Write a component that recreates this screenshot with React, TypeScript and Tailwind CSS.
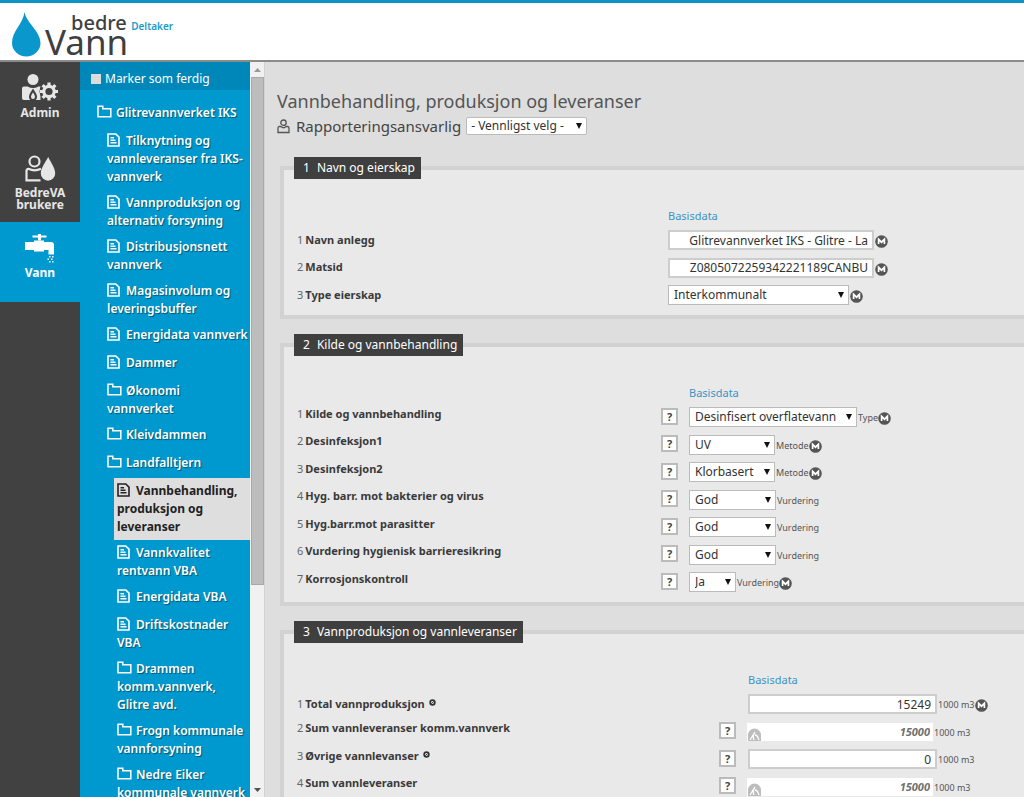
import type { ReactNode } from "react";

type TreeItem = {
    lines: string[];
    icon: "folder" | "doc";
    level: 0 | 1 | 2;
    active?: boolean;
};

const tree: TreeItem[] = [
    { lines: ["Glitrevannverket IKS"], icon: "folder", level: 0 },
    { lines: ["Tilknytning og", "vannleveranser fra IKS-", "vannverk"], icon: "doc", level: 1 },
    { lines: ["Vannproduksjon og", "alternativ forsyning"], icon: "doc", level: 1 },
    { lines: ["Distribusjonsnett", "vannverk"], icon: "doc", level: 1 },
    { lines: ["Magasinvolum og", "leveringsbuffer"], icon: "doc", level: 1 },
    { lines: ["Energidata vannverk"], icon: "doc", level: 1 },
    { lines: ["Dammer"], icon: "doc", level: 1 },
    { lines: ["Økonomi", "vannverket"], icon: "folder", level: 1 },
    { lines: ["Kleivdammen"], icon: "folder", level: 1 },
    { lines: ["Landfalltjern"], icon: "folder", level: 1 },
    { lines: ["Vannbehandling,", "produksjon og", "leveranser"], icon: "doc", level: 2, active: true },
    { lines: ["Vannkvalitet", "rentvann VBA"], icon: "doc", level: 2 },
    { lines: ["Energidata VBA"], icon: "doc", level: 2 },
    { lines: ["Driftskostnader", "VBA"], icon: "doc", level: 2 },
    { lines: ["Drammen", "komm.vannverk,", "Glitre avd."], icon: "folder", level: 2 },
    { lines: ["Frogn kommunale", "vannforsyning"], icon: "folder", level: 2 },
    { lines: ["Nedre Eiker", "kommunale vannverk"], icon: "folder", level: 2 },
];

const indent = ["pl-[17px]", "pl-[27px]", "pl-[37px]"];

function FolderIcon() {
    return (
        <svg className="inline-block mr-1 align-[-1px]" width="15" height="13" viewBox="0 0 15 13" fill="none" stroke="currentColor" strokeWidth="1.5">
            <path d="M1 1.2h4.8v2.6h8v8H1z" />
        </svg>
    );
}

function DocIcon() {
    return (
        <svg className="inline-block mr-1.5 align-[-2px]" width="13" height="14" viewBox="0 0 13 14" fill="none" stroke="currentColor" strokeWidth="1.6">
            <path d="M1 1h7.8L12 4.2V13H1z" />
            <path d="M3.500 4.700h3.500M3.500 7.200h5M3.500 9.800h6" strokeWidth="1.400" />
        </svg>
    );
}

function AdminIcon() {
    return (
        <svg width="36" height="30" viewBox="0 0 36 30" fill="#e6e6e6">
            <circle cx="11" cy="6.5" r="5.5" />
            <path d="M0 15.500q0-2 2-2h3.500q5.500 3 11 0h2v13.500H2q-2 0-2-2z" />
            <path d="M11 15.500c2.200 3.500 4 5.800 4 8.200a4 4 0 0 1-8 0c0-2.400 1.800-4.700 4-8.200z" fill="#414141" />
            <path d="M11 19.500c1.300 2 2 3 2 4.500a2 2 0 0 1-4 0c0-1.500.7-2.500 2-4.500z" />
            <circle cx="27" cy="18.500" r="9.500" fill="#414141" />
            <circle cx="27" cy="18.500" r="5.200" fill="none" stroke="#e6e6e6" strokeWidth="3.200" />
            <g stroke="#e6e6e6" strokeWidth="3.200">
                <path d="M27 9.500v4M27 23.500v4M18 18.500h4M32 18.500h4M20.600 12.100l3 3M30.400 21.900l3 3M33.400 12.100l-3 3M23.600 21.900l-3 3" />
            </g>
        </svg>
    );
}

function UsersIcon() {
    return (
        <svg width="31" height="27" viewBox="0 0 31 27" fill="none" stroke="#e6e6e6" strokeWidth="2.200">
            <circle cx="9.500" cy="6.500" r="5" />
            <path d="M16 13.800q-6.500 3-12.500 0-2 0-2 2.500v9h14" />
            <path d="M23.200 2c3 6 7 11 7 16.500a7.200 7.200 0 0 1-14.400 0C15.800 13 20 8 23.200 2z" fill="#e6e6e6" stroke="none" />
        </svg>
    );
}

function TapIcon() {
    return (
        <svg width="30" height="29" viewBox="0 0 30 29" fill="#fff">
            <path d="M7.500 1.500H13V0h3v1.500h5.500v2H16v3h-3v-3H7.500z" />
            <path d="M0 8h9V6.500h10V8h7q3 0 3 3v9.500h-5.500V16H19v1.500H9V16H0z" />
            <path d="M24 22h1.500v1.500H24zM27 22h1.500v1.500H27zM22.500 24.500H24V26h-1.500zM26 24.500h1.500V26H26zM24 27h1.500v1.500H24zM27 27h1.500v1.500H27z" />
        </svg>
    );
}

function Header() {
    return (
        <header className="flex items-start h-[62px] shrink-0 bg-white border-t-3 border-t-[#0b94c5] border-b-2 border-b-[#8c8c8c]">
            <a href="#" className="flex pl-3 text-[#3f3f3f]" aria-label="bedre Vann">
                <svg className="mt-2" width="29" height="46" viewBox="0 0 29 46">
                    <path d="M12.500 1c1.800 11 16 19 16 31A14.200 13.500 0 0 1 0 32C0 20 11 13 12.500 1z" fill="#0a98cc" />
                </svg>
                <span className="flex flex-col pl-1 pt-[11px]">
                    <span className="pl-[26px] text-[20px] leading-[18px] font-medium">bedre</span>
                    <span className="text-[35px] leading-[20px]">Vann</span>
                </span>
            </a>
            <span className="pt-4 pl-[3px] text-[10px] leading-[14px] font-semibold text-[#1b9bc9]">Deltaker</span>
        </header>
    );
}

function NavItem({ icon, children, active }: { icon: ReactNode; children: ReactNode; active?: boolean }) {
    return (
        <a
            href="#"
            className={
                "flex flex-col items-center gap-1 h-20 pt-[11px] text-[12px] leading-[12px] font-bold text-center " +
                (active ? "bg-[#0099cf] text-white" : "text-[#e6e6e6]")
            }
        >
            <span className="flex items-center h-[30px]">{icon}</span>
            <span>{children}</span>
        </a>
    );
}

function Tree() {
    return (
        <div className="flex w-[185px] shrink-0 bg-[#0099cf]">
            <div className="w-[170px] overflow-hidden text-white">
                <label className="flex items-center gap-1 h-7 pt-1.5 pl-[11px] bg-[#0087ba] text-[12px]">
                    <input type="checkbox" className="appearance-none w-[10px] h-[10px] bg-[#dcdcdc]" />
                    Marker som ferdig
                </label>
                <ul className="pt-[10px]">
                    {tree.map((item) => (
                        <li key={item.lines[0]} className={item.active ? "ml-[34px]" : ""}>
                            <a
                                href="#"
                                className={
                                    "block min-h-7 py-1 text-[12px] leading-[18px] whitespace-nowrap " +
                                    (item.active
                                        ? "pl-[3px] font-bold bg-[#dedede] text-[#222]"
                                        : indent[item.level] + " font-semibold [text-shadow:1px_1px_1px_rgba(0,0,0,0.45)]")
                                }
                            >
                                {item.icon === "folder" ? <FolderIcon /> : <DocIcon />}
                                {item.lines.map((line, i) => (
                                    <span key={line}>
                                        {i > 0 && <br />}
                                        {line}
                                    </span>
                                ))}
                            </a>
                        </li>
                    ))}
                </ul>
            </div>
            <div className="flex flex-col w-[15px] pl-px bg-[#f1f1f1] border-r border-[#d2d2d2]">
                <span className="flex items-center justify-center h-[15px] shrink-0">
                    <svg width="7" height="4" viewBox="0 0 7 4"><path d="M0 4l3.500-4L7 4z" fill="#999" /></svg>
                </span>
                <div className="flex-1">
                    <div className="h-[72%] bg-[#bdbdbd] border border-[#a8a8a8]" />
                </div>
                <span className="flex items-center justify-center h-[15px] shrink-0">
                    <svg width="7" height="4" viewBox="0 0 7 4"><path d="M0 0l3.500 4L7 0z" fill="#505050" /></svg>
                </span>
            </div>
        </div>
    );
}

function Badge() {
    return (
        <svg className="shrink-0 mt-[3px]" width="13" height="13" viewBox="0 0 13 13">
            <circle cx="6.500" cy="6.500" r="6.300" fill="#555" />
            <path d="M3.600 9V4.300l2.900 2.900 2.900-2.900V9" fill="none" stroke="#fff" strokeWidth="1.700" />
        </svg>
    );
}

function Select({ id, value, width, className = "h-5 pl-[5px]" }: { id: string; value: string; width: string; className?: string }) {
    return (
        <span className={"relative inline-flex items-center " + width}>
            <select
                id={id}
                className={"appearance-none w-full text-[12px] leading-[16px] text-[#333] bg-white border border-[#bbb] " + className}
            >
                <option>{value}</option>
            </select>
            <svg className="absolute right-[5px] pointer-events-none" width="6" height="6" viewBox="0 0 6 6">
                <path d="M0 0h6L3 6z" fill="#111" />
            </svg>
        </span>
    );
}

function Input({ id, value, width }: { id: string; value: string; width: string }) {
    return (
        <input
            id={id}
            defaultValue={value}
            className={"h-5 px-1 text-[12px] text-right text-[#333] bg-white border-2 border-[#cdcdcd] " + width}
        />
    );
}

function Computed({ id, value }: { id: string; value: string }) {
    return (
        <span className="relative -ml-px">
            <input
                id={id}
                readOnly
                defaultValue={value}
                className="block w-[186px] h-[18px] px-[3px] text-[11px] font-bold italic text-right text-[#707070] bg-white"
            />
            <svg className="absolute left-0 bottom-0" width="15" height="13" viewBox="0 0 15 13">
                <path d="M1 13V7a6.500 6.500 0 0 1 13 0v6z" fill="#bdbdbd" />
                <path d="M3 12l5-8M8 4c-2 3-2 6-1 8M8 7c3 0 3 3 4 5" fill="none" stroke="#fff" strokeWidth="1.300" />
            </svg>
        </span>
    );
}

function Section({ no, title, cols, children }: { no: number; title: string; cols: string; children: ReactNode }) {
    return (
        <fieldset className="mb-[15px] pt-[27px] pb-[6px] pl-[13px] bg-[#e9e9e9] border-4 border-r-0 border-[#d2d2d2]">
            <legend className="-ml-[3px] pl-[9px] pr-[6px] text-[12px] leading-[22px] text-white bg-[#3f3f3f]">
                {no}
                <span className="pl-[7px]">{title}</span>
            </legend>
            <div className={"grid h-5 items-center " + cols}>
                <span className="col-start-3 text-[11px] text-[#3a94c4]">Basisdata</span>
            </div>
            <div>{children}</div>
        </fieldset>
    );
}

type RowProps = {
    id: string;
    no: number;
    label: string;
    cols: string;
    raised?: boolean;
    help?: boolean;
    mark?: boolean;
    unit?: string;
    badge?: boolean;
    children: ReactNode;
};

function Row({ id, no, label, cols, raised, help, mark, unit, badge, children }: RowProps) {
    return (
        <div className={"grid items-center h-7 even:h-[27px] " + cols}>
            <label htmlFor={id} className={"text-[11px] font-bold text-[#3a3a3a] " + (raised ? "pb-1.5" : "")}>
                <span className="pr-[2px] font-normal text-[#666]">{no}</span>
                {label}
                {mark && (
                    <svg className="inline-block ml-1 align-[2px]" width="7" height="7" viewBox="0 0 7 7">
                        <circle cx="3.500" cy="3.500" r="2.300" fill="#eee" stroke="#333" strokeWidth="1.800" />
                        <path d="M2.500 4.500l2-2" stroke="#333" />
                    </svg>
                )}
            </label>
            <span className="pb-[2px]">
                {help && (
                    <button type="button" className="block w-[17px] h-[17px] text-[11px] leading-[13px] font-bold text-[#444] bg-white border-2 border-[#bbb]">
                        ?
                    </button>
                )}
            </span>
            <span className="flex items-center gap-px">
                {children}
                <span className="flex items-center">
                    {unit && <span className="pt-[2px] text-[9px] text-[#555]">{unit}</span>}
                    {badge && <Badge />}
                </span>
            </span>
        </div>
    );
}

const colsA = "grid-cols-[371px_0px_1fr]";
const colsB = "grid-cols-[364px_28px_1fr]";
const colsC = "grid-cols-[422px_29px_1fr]";

const treatment = [
    { label: "Kilde og vannbehandling", value: "Desinfisert overflatevann", width: "w-[168px]", unit: "Type", badge: true },
    { label: "Desinfeksjon1", value: "UV", width: "w-[86px]", unit: "Metode", badge: true },
    { label: "Desinfeksjon2", value: "Klorbasert", width: "w-[86px]", unit: "Metode", badge: true },
    { label: "Hyg. barr. mot bakterier og virus", value: "God", width: "w-[87px]", unit: "Vurdering" },
    { label: "Hyg.barr.mot parasitter", value: "God", width: "w-[87px]", unit: "Vurdering" },
    { label: "Vurdering hygienisk barrieresikring", value: "God", width: "w-[87px]", unit: "Vurdering" },
    { label: "Korrosjonskontroll", value: "Ja", width: "w-[47px]", unit: "Vurdering", badge: true },
];

function App() {
    return (
        <div className="flex flex-col h-screen overflow-hidden bg-[#dedede] font-['Noto_Sans',sans-serif]">
            <Header />
            <div className="flex flex-1 min-h-0">
                <nav className="w-20 shrink-0 bg-[#414141]">
                    <NavItem icon={<AdminIcon />}>Admin</NavItem>
                    <NavItem icon={<UsersIcon />}>BedreVA<br />brukere</NavItem>
                    <NavItem icon={<TapIcon />} active>Vann</NavItem>
                </nav>
                <Tree />
                <main className="flex-1 min-w-0 overflow-hidden pt-[27px] pl-[15px]">
                    <h1 className="-ml-[3px] text-[18px] leading-[24px] text-[#555]">Vannbehandling, produksjon og leveranser</h1>
                    <div className="flex items-center -ml-[3px] mb-[18px] h-[26px]">
                        <svg width="13" height="15" viewBox="0 0 13 15" fill="none" stroke="#555" strokeWidth="1.300">
                            <circle cx="6.500" cy="3.700" r="2.700" />
                            <path d="M4 7.500H2.500Q1 7.500 1 9v4.500h11V9q0-1.500-1.500-1.500H9" />
                            <path d="M4 7.500q2.500 2.500 5 0" />
                        </svg>
                        <label htmlFor="ansvarlig" className="pl-1.5 pr-[5px] text-[15px] text-[#444]">Rapporteringsansvarlig</label>
                        <Select id="ansvarlig" value="- Vennligst velg -" width="w-[121px]" className="h-[18px] pl-1 rounded-xs" />
                    </div>

                    <Section no={1} title="Navn og eierskap" cols={colsA}>
                        <Row id="navn" no={1} label="Navn anlegg" cols={colsA} badge>
                            <Input id="navn" value="Glitrevannverket IKS - Glitre - La" width="w-[206px]" />
                        </Row>
                        <Row id="matsid" no={2} label="Matsid" cols={colsA} badge>
                            <Input id="matsid" value="Z0805072259342221189CANBU" width="w-[206px]" />
                        </Row>
                        <Row id="eierskap" no={3} label="Type eierskap" cols={colsA} badge>
                            <Select id="eierskap" value="Interkommunalt" width="w-[181px]" />
                        </Row>
                    </Section>

                    <Section no={2} title="Kilde og vannbehandling" cols={colsB}>
                        {treatment.map((row, i) => (
                            <Row key={row.label} id={"kilde" + i} no={i + 1} label={row.label} cols={colsB} unit={row.unit} badge={row.badge} raised help>
                                <Select id={"kilde" + i} value={row.value} width={row.width} />
                            </Row>
                        ))}
                    </Section>

                    <Section no={3} title="Vannproduksjon og vannleveranser" cols={colsC}>
                        <Row id="total" no={1} label="Total vannproduksjon" cols={colsC} unit="1000 m3" mark badge>
                            <Input id="total" value="15249" width="w-[189px]" />
                        </Row>
                        <Row id="sumkomm" no={2} label="Sum vannleveranser komm.vannverk" cols={colsC} unit="1000 m3" raised help>
                            <Computed id="sumkomm" value="15000" />
                        </Row>
                        <Row id="ovrige" no={3} label="Øvrige vannlevanser" cols={colsC} unit="1000 m3" raised help mark>
                            <Input id="ovrige" value="0" width="w-[189px]" />
                        </Row>
                        <Row id="sum" no={4} label="Sum vannleveranser" cols={colsC} unit="1000 m3" raised help>
                            <Computed id="sum" value="15000" />
                        </Row>
                    </Section>
                </main>
            </div>
        </div>
    );
}

export default App;
